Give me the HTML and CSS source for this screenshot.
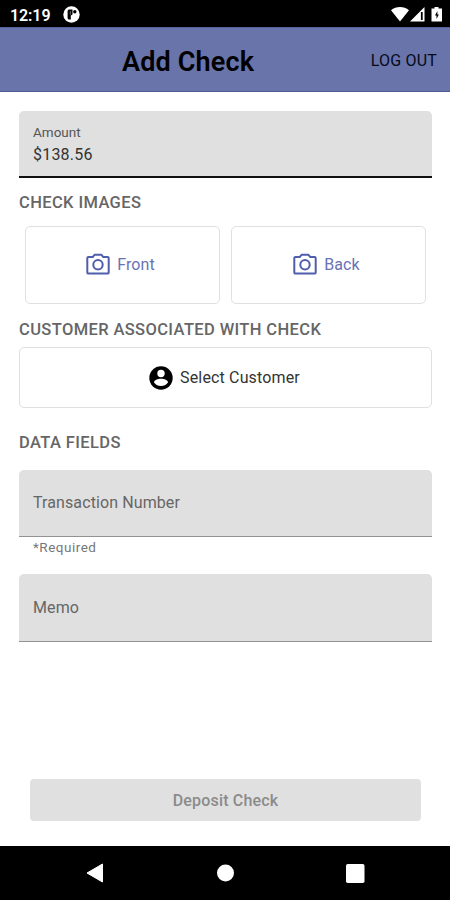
FILE: index.html
```html
<!DOCTYPE html>
<html lang="en">
<head>
<meta charset="utf-8">
<title>Add Check</title>
<link rel="stylesheet" href="styles.css">
</head>
<body>
<div class="status">
  <span class="time">12:19</span>
  <svg class="app-icon" width="17" height="17" viewBox="0 0 17 17"><circle cx="8.500" cy="8.500" r="8.200" fill="#fff"/><path d="M4.600 5Q4.600 3.500 6.200 3.500H9.500V8.500L7.800 9.500V13.500H6.200Q4.600 13.500 4.600 12Z" fill="#000"/><path d="M7.300 5.200v3.500" stroke="#999" stroke-width=".7"/><circle cx="11.800" cy="5.700" r="1.700" fill="#000"/></svg>
  <svg class="signals" width="52" height="17" viewBox="0 0 52 17"><path d="M0 4.200C5.100-.2 12.900-.2 18 4.200L9 15.500Z" fill="#fff"/><path d="M19 15.500 33.500 1V15.500Z" fill="#fff"/><path d="M30.800 6v8" stroke="#000" stroke-width="1.800"/><path d="M43.500 1h4v1.500h3.500V15.500H40.500V2.500h3Z" fill="#fff"/><path d="m46.400 5-2.400 4.600h1.500V13l2.400-4.600h-1.500Z" fill="#000"/></svg>
</div>
<header class="header">
  <h1 class="title">Add Check</h1>
  <span class="logout">LOG OUT</span>
</header>
<main class="content">
  <div class="field filled"><span class="label">Amount</span><span class="value">$138.56</span></div>
  <h2 class="section images">CHECK IMAGES</h2>
  <div class="cards">
    <div class="card"><svg width="24" height="23" viewBox="0 0 24 23" fill="none" stroke="#4f5eac" stroke-width="2"><path d="M2.500 3.900H6.800L8.700 1.700h6.600l1.900 2.200h4.300q1.200 0 1.200 1.200V19.400q0 1.200-1.200 1.200h-19q-1.200 0-1.200-1.200V5.100q0-1.200 1.200-1.200Z"/><circle cx="12" cy="11.800" r="4.700"/></svg><span>Front</span></div>
    <div class="card"><svg width="24" height="23" viewBox="0 0 24 23" fill="none" stroke="#4f5eac" stroke-width="2"><path d="M2.500 3.900H6.800L8.700 1.700h6.600l1.900 2.200h4.300q1.200 0 1.200 1.200V19.400q0 1.200-1.200 1.200h-19q-1.200 0-1.200-1.200V5.100q0-1.200 1.200-1.200Z"/><circle cx="12" cy="11.800" r="4.700"/></svg><span>Back</span></div>
  </div>
  <h2 class="section customer">CUSTOMER ASSOCIATED WITH CHECK</h2>
  <div class="select"><svg width="24" height="24" viewBox="0 0 24 24"><circle cx="12" cy="12" r="11.700" fill="#000"/><circle cx="12" cy="7.500" r="3.700" fill="#fff"/><path d="M5 16.500c.4-5 13.600-5 14 0-3.300 4.800-10.700 4.800-14 0Z" fill="#fff"/></svg><span>Select Customer</span></div>
  <h2 class="section data">DATA FIELDS</h2>
  <div class="field empty">Transaction Number</div>
  <div class="required">*Required</div>
  <div class="field empty memo">Memo</div>
  <div class="deposit">Deposit Check</div>
</main>
<nav class="nav">
  <svg width="18" height="20" viewBox="0 0 18 20"><path d="M1 10 16.500 1V19Z" fill="#fff" stroke="#fff" stroke-linejoin="round"/></svg>
  <svg width="18" height="18" viewBox="0 0 18 18"><circle cx="9.500" cy="9" r="8.500" fill="#fff"/></svg>
  <svg width="19" height="19" viewBox="0 0 19 19"><rect width="18.500" height="19" rx="1.800" fill="#fff"/></svg>
</nav>
</body>
</html>
```
FILE: styles.css
```css
* { box-sizing: border-box; }
body {
  margin: 0;
  width: 450px;
  height: 900px;
  display: flex;
  flex-direction: column;
  background: #fff;
  font-family: Roboto, sans-serif;
  overflow: hidden;
}
svg { display: block; flex: none; }
.status {
  height: 27px;
  padding: 2px 7px 0 10px;
  display: flex;
  align-items: center;
  background: #000;
}
.time { width: 53px; padding-top: 1px; color: #fff; font-size: 16px; font-weight: 600; letter-spacing: -.1px; }
.signals { margin-left: auto; }
.header {
  height: 65px;
  padding: 3px 13px 0 122px;
  display: flex;
  align-items: center;
  justify-content: space-between;
  background: #6874aa;
  border-top: 1px solid #53609a;
  border-bottom: 1px solid #4e5c93;
}
.title { margin: 0; padding-top: 2px; font-size: 27px; font-weight: 600; letter-spacing: .15px; white-space: nowrap; }
.logout { margin-top: -1px; font-size: 16px; font-weight: 400; letter-spacing: .2px; color: #05091a; }
.content { flex: 1; padding: 19px 18px 0 19px; }
.field {
  height: 67px;
  padding: 0 14px;
  display: flex;
  background: #e0e0e0;
  border-radius: 5px 5px 0 0;
}
.filled { flex-direction: column; padding-top: 12px; border-bottom: 2px solid #111; }
.label { height: 21px; line-height: 18px; font-size: 13.5px; color: #555; }
.value { line-height: 22px; font-size: 16px; letter-spacing: .2px; color: #333; }
.empty { align-items: center; padding-bottom: 1px; border-bottom: 1px solid #929292; font-size: 16px; letter-spacing: .1px; color: #666; }
.memo { height: 68px; }
.section { margin: 0; line-height: 20px; font-size: 16.5px; font-weight: 500; letter-spacing: .38px; color: #666; white-space: nowrap; }
.images { margin-top: 15px; }
.cards { display: flex; gap: 11px; margin: 13px 6px 0; }
.card {
  width: 195px;
  height: 78px;
  padding: 0 4px 1px 0;
  display: flex;
  align-items: center;
  justify-content: center;
  gap: 7px;
  border: 1px solid #e0e0e0;
  border-radius: 5px;
  color: #6972b5;
  font-size: 16px;
  letter-spacing: .1px;
}
.customer { margin-top: 16px; }
.select {
  height: 61px;
  margin-top: 7px;
  padding-right: 2px;
  display: flex;
  align-items: center;
  justify-content: center;
  gap: 7px;
  border: 1px solid #e0e0e0;
  border-radius: 5px;
  color: #333;
  font-size: 16px;
  letter-spacing: .15px;
}
.data { margin: 25px 0 17px; }
.required { height: 37px; padding-left: 14px; line-height: 21px; font-size: 13.5px; letter-spacing: .5px; color: #777; }
.deposit {
  width: 391px;
  height: 42px;
  margin: 137px 0 0 11px;
  padding-top: 1px;
  display: flex;
  align-items: center;
  justify-content: center;
  background: #e0e0e0;
  border-radius: 4px;
  color: #8b8b8b;
  font-size: 16px;
  font-weight: 500;
  letter-spacing: .18px;
}
.nav {
  height: 54px;
  padding: 0 85px 0 86px;
  display: flex;
  align-items: center;
  justify-content: space-between;
  background: #000;
}
```
